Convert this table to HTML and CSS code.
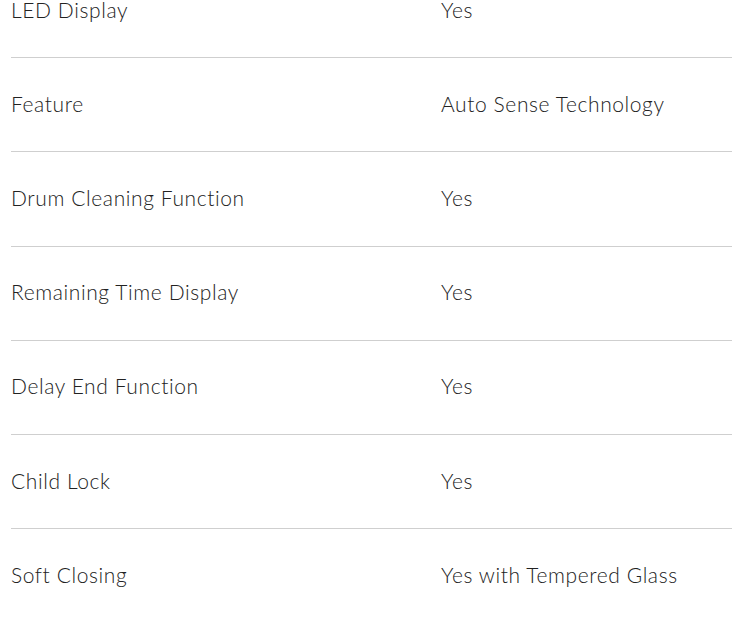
FILE: index.html
```html
<!DOCTYPE html>
<html lang="en">
<head>
<meta charset="utf-8">
<title>Specifications</title>
<link rel="stylesheet" href="styles.css">
</head>
<body>
<div class="specs">
  <div class="row"><div class="label">LED Display</div><div class="value">Yes</div></div>
  <div class="row"><div class="label">Feature</div><div class="value">Auto Sense Technology</div></div>
  <div class="row"><div class="label">Drum Cleaning Function</div><div class="value">Yes</div></div>
  <div class="row"><div class="label">Remaining Time Display</div><div class="value">Yes</div></div>
  <div class="row"><div class="label">Delay End Function</div><div class="value">Yes</div></div>
  <div class="row"><div class="label">Child Lock</div><div class="value">Yes</div></div>
  <div class="row last"><div class="label">Soft Closing</div><div class="value">Yes with Tempered Glass</div></div>
</div>
</body>
</html>
```

FILE: styles.css
```css
html, body {
  margin: 0;
  padding: 0;
  background: #fff;
}
body {
  font-family: "Lato", "Noto Sans", sans-serif;
  font-weight: 300;
  color: #222;
  overflow: hidden;
}
.specs {
  margin: -36px 0 0 11px;
}
.row {
  box-sizing: border-box;
  display: grid;
  grid-template-columns: 430px 1fr;
  align-items: center;
  height: 94.2px;
  padding-bottom: 2px;
  border-bottom: 1px solid #cfcfcf;
  font-size: 21px;
  line-height: 24px;
  letter-spacing: 0.6px;
}
.row.last {
  border-bottom: none;
}
```
